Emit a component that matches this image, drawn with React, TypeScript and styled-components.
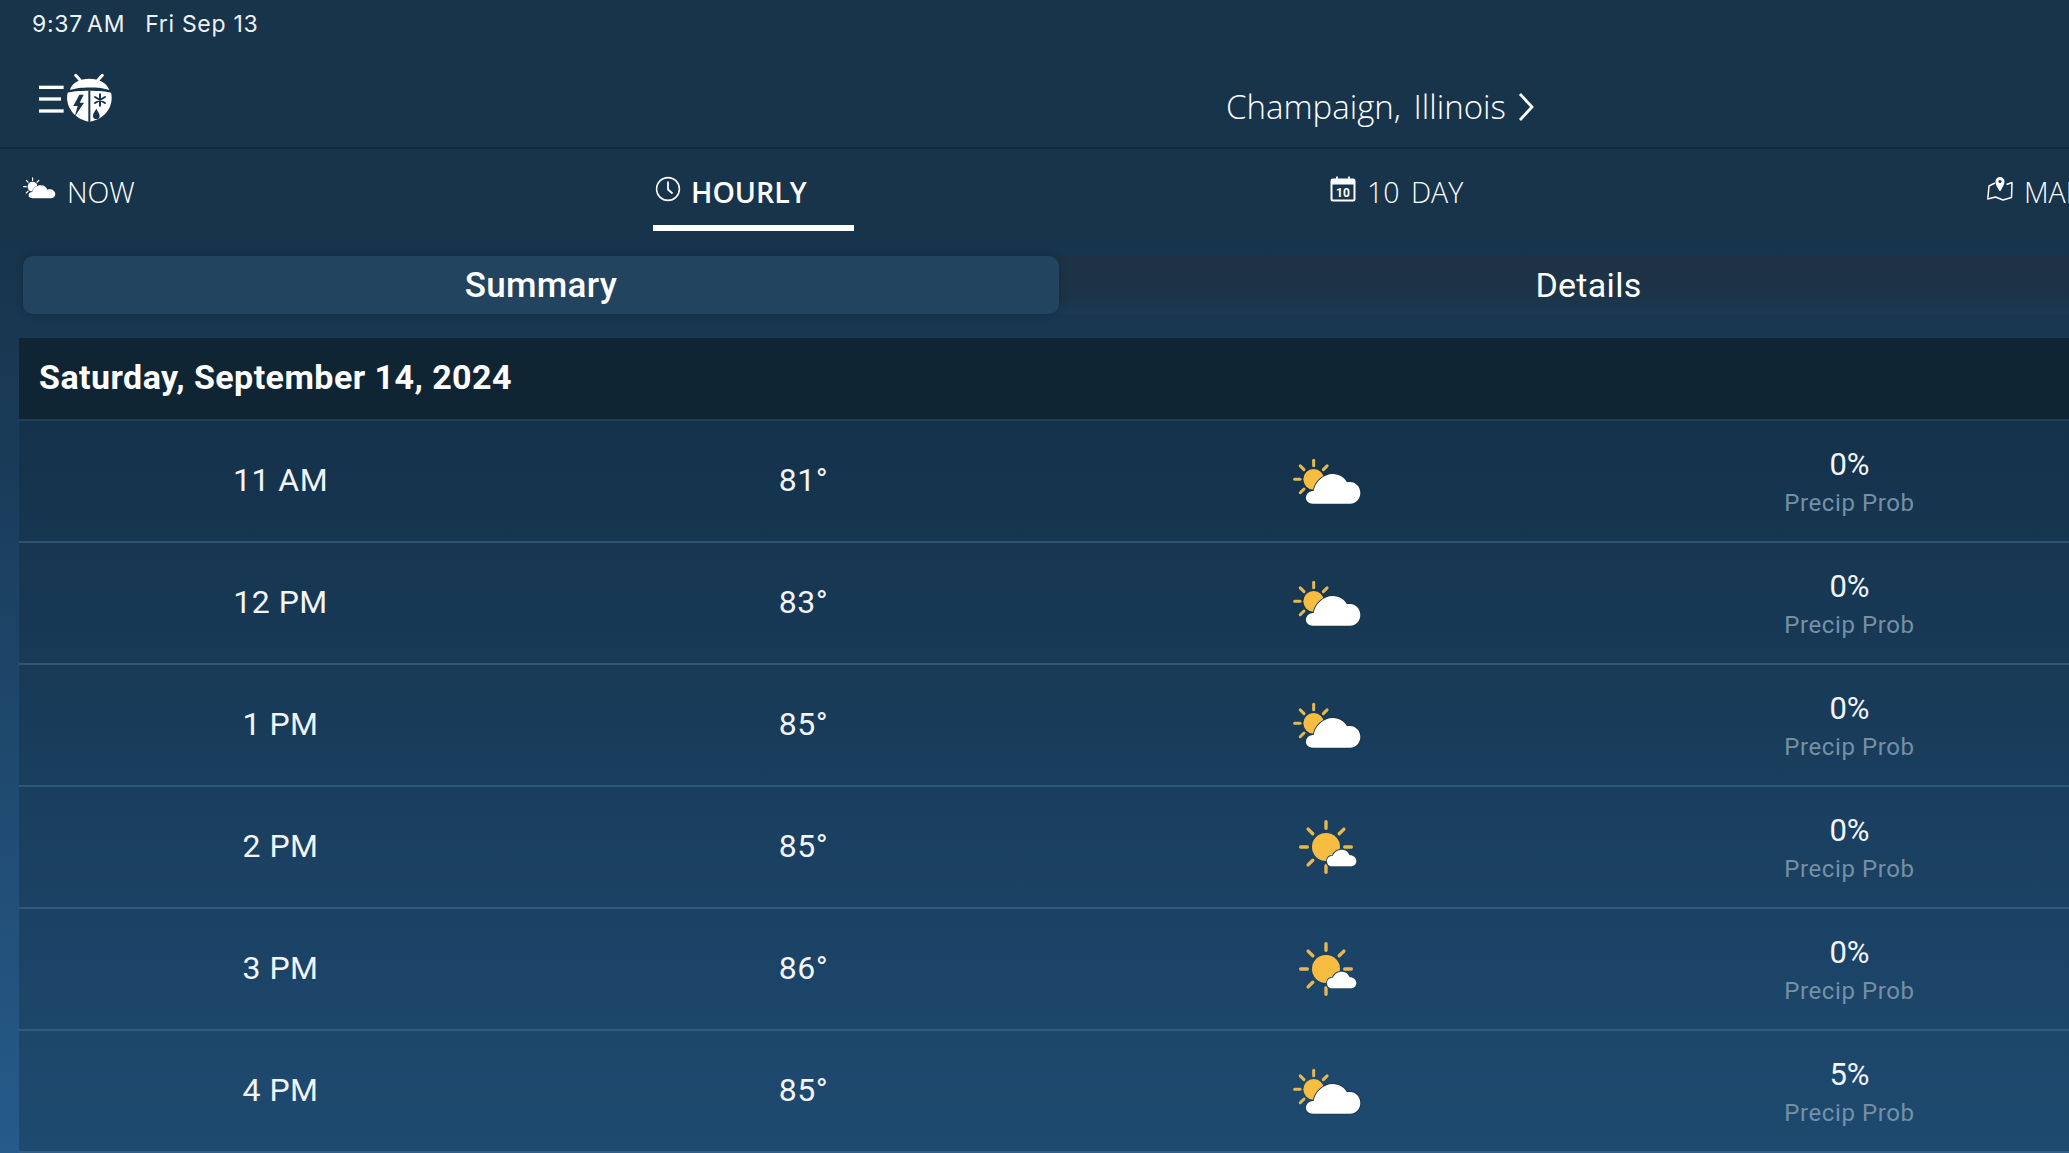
import React from "react";
import styled, { createGlobalStyle } from "styled-components";

const GlobalStyle = createGlobalStyle`
  html, body {
    margin: 0;
    padding: 0;
    background: #17344b;
  }
  * {
    box-sizing: border-box;
  }
`;

const Page = styled.div`
  width: 2069px;
  height: 1153px;
  overflow: hidden;
  display: flex;
  flex-direction: column;
  color: #fff;
  font-family: Roboto, sans-serif;
  background: linear-gradient(180deg, #17344b 0%, #17344b 20%, #193a57 37%, #265b8a 100%);
`;

const StatusBar = styled.div`
  height: 48px;
  padding: 9px 0 0 32px;
  display: flex;
  gap: 20px;
  font-family: Inter, sans-serif;
  font-size: 23px;
  line-height: 31px;
  letter-spacing: 0.7px;
  color: #eef2f5;
`;

const StatusTime = styled.span`
  word-spacing: -3px;
`;

const Header = styled.div`
  height: 101px;
  display: grid;
  grid-template-columns: 1fr;
  position: relative;
  border-bottom: 2px solid #0f2a3e;
  padding-left: 20px;
`;

const Logo = styled.svg`
  width: 110px;
  height: 80px;
  margin-top: 12px;
  display: block;
`;

const City = styled.div`
  position: absolute;
  left: 1226px;
  top: 38px;
  display: flex;
  align-items: center;
  gap: 12px;
  font-family: "Open Sans", sans-serif;
  font-weight: 300;
  font-size: 33px;
  line-height: 42px;
  word-spacing: 4px;
  white-space: nowrap;
`;

const Tabs = styled.div`
  height: 82px;
  padding-left: 23px;
  display: grid;
  grid-template-columns: 630px 677px 657px 100px;
`;

const Tab = styled.div<{ $active?: boolean }>`
  align-self: start;
  justify-self: start;
  height: 82px;
  display: flex;
  align-items: flex-start;
  padding: ${(p) => (p.$active ? "23px 47px 0 2px" : "23px 0 0 0")};
  gap: ${(p) => (p.$active ? "10px" : "11px")};
  font-family: "Open Sans", sans-serif;
  font-weight: ${(p) => (p.$active ? 600 : 300)};
  font-size: 28.5px;
  line-height: 40px;
  word-spacing: 4px;
  white-space: nowrap;
  border-bottom: ${(p) => (p.$active ? "6px solid #fff" : "none")};
`;

const TabIcon = styled.svg`
  flex: none;
  margin-top: 4px;
`;

const Segments = styled.div`
  margin-top: 25px;
  margin-left: 23px;
  height: 58px;
  width: 2095px;
  display: grid;
  grid-template-columns: 1036px 1fr;
  background: linear-gradient(180deg, #1e3145 0%, #1c3448 70%, #193a52 100%);
`;

const Segment = styled.div<{ $active?: boolean }>`
  display: flex;
  align-items: center;
  justify-content: center;
  font-size: ${(p) => (p.$active ? "35px" : "34px")};
  font-weight: ${(p) => (p.$active ? 500 : 400)};
  letter-spacing: 0.3px;
  border-radius: ${(p) => (p.$active ? "10px" : "0")};
  background: ${(p) => (p.$active ? "#23445f" : "transparent")};
  box-shadow: ${(p) => (p.$active ? "0 0 6px rgba(15, 35, 52, 0.5)" : "none")};
`;

const Table = styled.div`
  margin-top: 24px;
  margin-left: 19px;
  width: 2092px;
`;

const DateHeader = styled.div`
  height: 83px;
  padding: 0 0 3px 20px;
  display: flex;
  align-items: center;
  background: #0f2534;
  border-bottom: 2px solid #1f3f58;
  font-size: 34px;
  font-weight: 700;
  letter-spacing: 0.45px;
`;

const Row = styled.div`
  height: 122px;
  display: grid;
  grid-template-columns: repeat(4, 523px);
  align-items: center;
  justify-items: center;
  background: rgba(10, 30, 45, 0.27);
  border-bottom: 2px solid rgba(80, 125, 165, 0.4);
`;

const Cell = styled.div`
  font-size: 32px;
  letter-spacing: 0.5px;
  color: #f2f5f7;
  padding-bottom: 3px;
`;

const Precip = styled.div`
  display: flex;
  flex-direction: column;
  align-items: center;
  gap: 5px;
  padding-top: 2px;
`;

const PrecipValue = styled.div`
  font-size: 31px;
  line-height: 36px;
  color: #f2f5f7;
`;

const PrecipLabel = styled.div`
  font-size: 24px;
  line-height: 30px;
  letter-spacing: 0.6px;
  color: #7590a6;
`;

const WeatherSvg = styled.svg`
  width: 120px;
  height: 80px;
  display: block;
`;

const rays = (cx: number, cy: number, inner: number, outer: number, skip: number[]) =>
  [0, 45, 90, 135, 180, 225, 270, 315]
    .filter((a) => !skip.includes(a))
    .map((a) => {
      const r = (a * Math.PI) / 180;
      return (
        <line
          key={a}
          x1={cx + inner * Math.cos(r)}
          y1={cy + inner * Math.sin(r)}
          x2={cx + outer * Math.cos(r)}
          y2={cy + outer * Math.sin(r)}
          strokeLinecap="round"
        />
      );
    });

const bigCloud =
  "M128 188 C112 188 105 176 107 168 C109 156 118 150 130 150 C133 123 160 99 187 99 C207 99 224 111 230 124 C252 118 270 135 270 155 C270 175 255 188 240 188 Z";
const smallCloud =
  "M182 168 C172 168 168 160 168 152 C168 142 176 135 186 136 C190 124 202 118 213 118 C225 118 233 127 236 135 C248 135 256 143 256 152 C256 162 248 168 238 168 Z";

function PartlyCloudy() {
  return (
    <WeatherSvg viewBox="-10 0 360 240">
      <circle cx="130" cy="115" r="31" fill="#f6bd41" />
      <g stroke="#e6b94f" strokeWidth="9">
        {rays(130, 115, 41, 57, [0, 45, 90])}
      </g>
      <path d={bigCloud} fill="#fff" stroke="#17344b" strokeWidth="5" paintOrder="stroke" />
    </WeatherSvg>
  );
}

function MostlySunny() {
  return (
    <WeatherSvg viewBox="-12 -10 360 240">
      <circle cx="165" cy="110" r="42" fill="#f6bd41" />
      <g stroke="#e6b94f" strokeWidth="10">
        {rays(165, 110, 56, 76, [])}
      </g>
      <path d={smallCloud} fill="#fff" stroke="#1c4464" strokeWidth="6" paintOrder="stroke" />
    </WeatherSvg>
  );
}

function NowIcon() {
  return (
    <TabIcon width="33" height="24" viewBox="68 530 100 72">
      <circle cx="97" cy="562" r="15" fill="#fff" />
      <g stroke="#fff" strokeWidth="3.5">
        {rays(97, 562, 19, 27, [0, 45, 90])}
      </g>
      <path
        d="M96 597 C88 597 84 592 85 586 C86 581 90 578 96 578 C99 566 110 558 122 558 C132 558 139 564 142 571 C154 567 166 574 166 585 C166 592 160 597 152 597 Z"
        fill="#fff"
        stroke="#17344b"
        strokeWidth="3"
        paintOrder="stroke"
      />
    </TabIcon>
  );
}

function ClockIcon() {
  return (
    <TabIcon width="26" height="26" viewBox="0 0 26 26" fill="none" stroke="#fff" strokeWidth="1.6">
      <circle cx="13" cy="13" r="11.4" />
      <path d="M13 5.5V13.5L17.5 17.5" strokeWidth="1.8" />
    </TabIcon>
  );
}

function CalendarIcon() {
  return (
    <TabIcon width="26" height="26" viewBox="0 0 26 26">
      <rect x="1.5" y="3.5" width="23" height="21" rx="1.5" fill="none" stroke="#fff" strokeWidth="2" />
      <rect x="1.5" y="3.5" width="23" height="5" fill="#fff" />
      <path d="M7 0.5V5M19 0.5V5" stroke="#fff" strokeWidth="1.8" />
      <text x="13" y="21" textAnchor="middle" fontSize="12" fontWeight="700" fontFamily="Roboto, sans-serif" fill="#fff">
        10
      </text>
    </TabIcon>
  );
}

function MapIcon() {
  return (
    <TabIcon width="26" height="26" viewBox="0 0 26 26" fill="none" stroke="#fff" strokeWidth="1.5">
      <path d="M8 7L2 10L0.8 23L8.5 21L16 24L24.5 21.5L25 6.5L19.5 8.5" strokeLinejoin="round" />
      <path d="M12.5 15C10 11 8.5 8.5 8.5 5.5A4.5 4.5 0 0 1 17.5 5.5C17.5 8.5 15.5 11 13.5 15Z" fill="#fff" stroke="none" />
      <circle cx="13" cy="5.5" r="1.6" fill="#17344b" stroke="none" />
    </TabIcon>
  );
}

function LogoMark() {
  return (
    <Logo viewBox="0 0 330 240">
      <g stroke="#fff" strokeWidth="10">
        <path d="M57 82H131" />
        <path d="M57 117H123" />
        <path d="M57 153H131" />
      </g>
      <path d="M150 90C155 68 180 56 208 56C236 56 261 68 268 90C240 80 178 80 150 90Z" fill="#fff" />
      <path d="M180 60L167 46M234 60L247 46" stroke="#fff" strokeWidth="9" strokeLinecap="round" />
      <path
        d="M143 98C165 90 250 90 273 98C280 125 270 172 208 186C148 172 136 125 143 98Z"
        fill="#fff"
      />
      <path d="M208 92V188" stroke="#17344b" strokeWidth="6" />
      <path d="M178 104L160 138H173L164 170L192 128H179L191 104Z" fill="#17344b" />
      <g stroke="#17344b" strokeWidth="6" strokeLinecap="round">
        <path d="M240 103V137M225 111L255 129M255 111L225 129" />
      </g>
      <path d="M229 146C223 156 219 160 219 167A10 10 0 0 0 239 167C239 160 234 156 229 146Z" fill="#17344b" />
    </Logo>
  );
}

const hours = [
  { time: "11 AM", temp: "81°", icon: "partly", precip: "0%" },
  { time: "12 PM", temp: "83°", icon: "partly", precip: "0%" },
  { time: "1 PM", temp: "85°", icon: "partly", precip: "0%" },
  { time: "2 PM", temp: "85°", icon: "sunny", precip: "0%" },
  { time: "3 PM", temp: "86°", icon: "sunny", precip: "0%" },
  { time: "4 PM", temp: "85°", icon: "partly", precip: "5%" },
];

export default function App() {
  return (
    <Page>
      <GlobalStyle />
      <StatusBar>
        <StatusTime>9:37 AM</StatusTime>
        <span>Fri Sep 13</span>
      </StatusBar>
      <Header>
        <LogoMark />
        <City>
          Champaign, Illinois
          <svg width="16" height="30" viewBox="0 0 16 30" fill="none" stroke="#fff" strokeWidth="2.8">
            <path d="M2 2L14 15L2 28" />
          </svg>
        </City>
      </Header>
      <Tabs>
        <Tab>
          <NowIcon />
          NOW
        </Tab>
        <Tab $active>
          <ClockIcon />
          HOURLY
        </Tab>
        <Tab>
          <CalendarIcon />
          10 DAY
        </Tab>
        <Tab>
          <MapIcon />
          MAP
        </Tab>
      </Tabs>
      <Segments>
        <Segment $active>Summary</Segment>
        <Segment>Details</Segment>
      </Segments>
      <Table>
        <DateHeader>Saturday, September 14, 2024</DateHeader>
        {hours.map((h) => (
          <Row key={h.time}>
            <Cell>{h.time}</Cell>
            <Cell>{h.temp}</Cell>
            {h.icon === "partly" ? <PartlyCloudy /> : <MostlySunny />}
            <Precip>
              <PrecipValue>{h.precip}</PrecipValue>
              <PrecipLabel>Precip Prob</PrecipLabel>
            </Precip>
          </Row>
        ))}
      </Table>
    </Page>
  );
}
